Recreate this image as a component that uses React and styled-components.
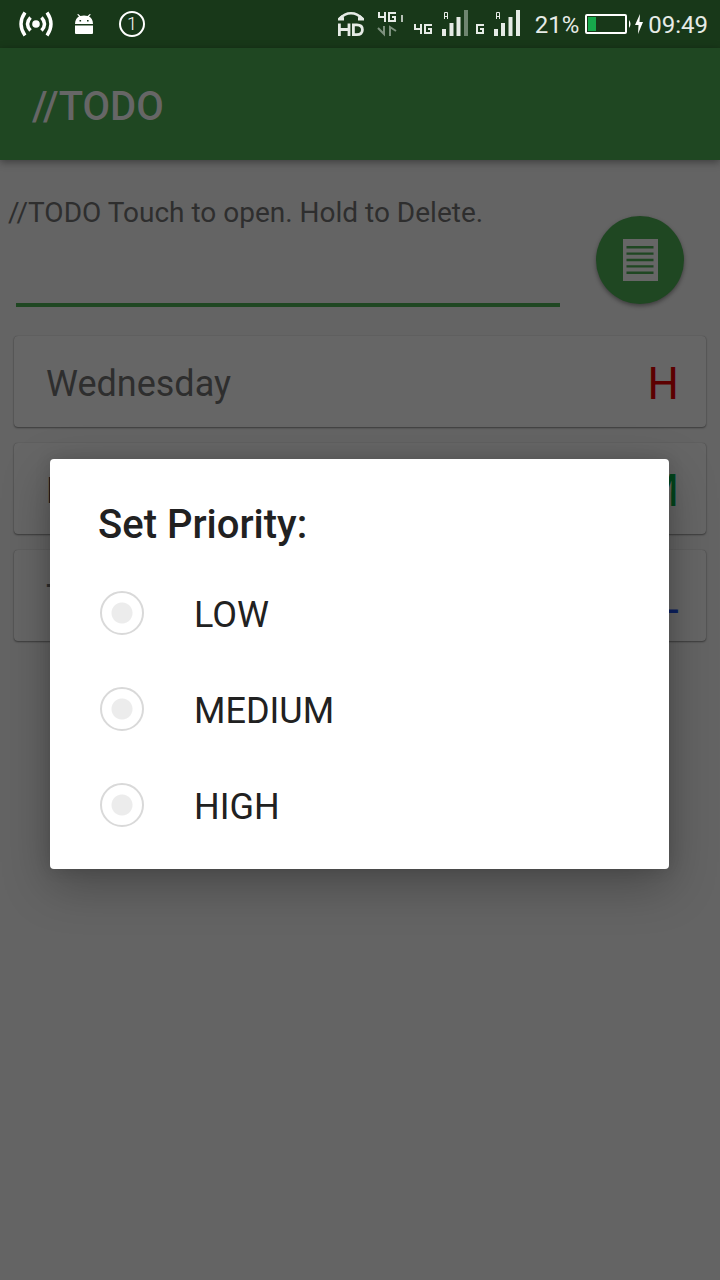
import React from 'react';
import styled, { createGlobalStyle } from 'styled-components';

const GlobalStyle = createGlobalStyle`
  *, *::before, *::after { box-sizing: border-box; }
  html, body { margin: 0; background: #646464; }
  body { font-family: Roboto, "Liberation Sans", sans-serif; color: #212121; }
`;

const Screen = styled.div`
  position: relative;
  min-height: 100vh;
  background: #646464;
`;

const StatusBar = styled.div`
  display: flex;
  align-items: center;
  justify-content: space-between;
  height: 48px;
  padding: 0 12px 0 19px;
  background: #183819;
`;

const StatusGroup = styled.div`
  display: flex;
  align-items: center;
  gap: ${({ $gap }) => $gap}px;

  svg { display: block; flex: none; }
`;

const StatusText = styled.span`
  padding-top: 2px;
  font-size: 24px;
  line-height: 46px;
  color: #e6ebe6;
`;

const CountBadge = styled.span`
  display: grid;
  place-items: center;
  width: 26px;
  height: 26px;
  margin-left: 4px;
  border: 2px solid #ffffff;
  border-radius: 50%;
  font-size: 18px;
  font-weight: 300;
  line-height: 22px;
  color: #ffffff;
`;

const AppBar = styled.header`
  display: flex;
  align-items: center;
  height: 112px;
  padding: 6px 32px 0;
  background: #1f4722;
  box-shadow: 0 2px 8px rgba(0, 0, 0, 0.4);
`;

const AppTitle = styled.h1`
  margin: 0;
  font-size: 40px;
  font-weight: 500;
  line-height: 48px;
  color: #666666;
`;

const Compose = styled.form`
  display: flex;
  align-items: flex-start;
  justify-content: space-between;
  padding: 32px 36px 29px 8px;
`;

const Field = styled.div`
  display: flex;
  flex: 1;
  flex-direction: column;
  margin-right: 36px;
`;

const Hint = styled.label`
  font-size: 28px;
  line-height: 42px;
  color: #2e2e2e;
`;

const TextInput = styled.input`
  height: 73px;
  margin-left: 8px;
  padding: 0;
  border: 0;
  border-bottom: 4px solid #1f4722;
  border-radius: 0;
  outline: none;
  background: transparent;
  color: #2e2e2e;
  font: inherit;
  font-size: 36px;
`;

const AddButton = styled.button`
  display: grid;
  place-items: center;
  flex: none;
  width: 88px;
  height: 88px;
  margin-top: 24px;
  padding: 0;
  border: 0;
  border-radius: 50%;
  background: #1f4722;
  box-shadow: 0 2px 4px rgba(0, 0, 0, 0.4);
`;

const TaskList = styled.ul`
  display: flex;
  flex-direction: column;
  gap: 16px;
  margin: 0;
  padding: 0 14px;
  list-style: none;
`;

const TaskCard = styled.li`
  display: flex;
  align-items: center;
  justify-content: space-between;
  height: 91px;
  padding: 5px 27px 0 32px;
  border-radius: 4px;
  background: #666666;
  box-shadow: 0 1px 2px rgba(0, 0, 0, 0.4), 0 0 1px rgba(0, 0, 0, 0.3);
`;

const TaskName = styled.span`
  font-size: 36px;
  line-height: 48px;
  color: ${({ $strong }) => ($strong ? '#1a1a1a' : '#2e2e2e')};
`;

const Priority = styled.span`
  font-size: 44px;
  line-height: 52px;
  color: ${({ $color }) => $color};
`;

const DialogLayer = styled.div`
  position: absolute;
  inset: 48px 0 0;
  display: flex;
  align-items: center;
  padding: 0 51px 0 50px;
`;

const Dialog = styled.section`
  flex: 1;
  padding: 42px 48px 16px;
  border-radius: 4px;
  background: #ffffff;
  box-shadow: 0 16px 48px rgba(0, 0, 0, 0.28), 0 0 16px rgba(0, 0, 0, 0.12);
`;

const DialogTitle = styled.h2`
  margin: 0 0 16px;
  font-size: 40px;
  font-weight: 500;
  line-height: 48px;
`;

const Options = styled.fieldset`
  margin: 0;
  padding: 0;
  border: 0;
`;

const Option = styled.label`
  display: flex;
  align-items: center;
  gap: 50px;
  height: 96px;
  padding-left: 2px;
`;

const OptionText = styled.span`
  padding-top: 4px;
  font-size: 36px;
  line-height: 48px;
`;

const Radio = styled.input`
  appearance: none;
  flex: none;
  width: 44px;
  height: 44px;
  margin: 0;
  border: 2px solid #d9d9d9;
  border-radius: 50%;
  background: radial-gradient(circle, #ececec 10px, transparent 11px);

  &:checked { background: radial-gradient(circle, #4caf50 10px, transparent 11px); }
`;

const tasks = [
  { name: 'Wednesday', level: 'H', color: '#5c0000' },
  { name: 'Monday', level: 'M', color: '#00461c', strong: true },
  { name: 'Tuesday', level: 'L', color: '#0d2160' },
];

const HotspotIcon = () => (
  <svg width="34" height="28" viewBox="1 0 34 28" fill="none" stroke="#fff" strokeWidth="3.4">
    <circle cx="18" cy="14" r="3.8" fill="#fff" stroke="none" />
    <path d="M12.5 7.5Q6.500 14 12.5 20.5M23.5 7.5Q29.500 14 23.5 20.5M7 2.500Q-1 14 7 25.500M29 2.500Q37 14 29 25.500" />
  </svg>
);

const AndroidIcon = () => (
  <svg width="18" height="20" viewBox="0 0 18 20">
    <path fill="#fff" d="M0 10C0 6 2 3.7 4 2.6L2.2.5 3.2 0 5.4 2Q9 .8 12.6 2L14.8 0l1 .5L14 2.6C16 3.7 18 6 18 10ZM0 11.5h18V19q0 1-1 1H1q-1 0-1-1Z" />
    <path fill="#183819" d="M4.5 6h1.600v1.600H4.500ZM12 6h1.600v1.600H12Z" />
  </svg>
);

const HdCallIcon = () => (
  <svg width="28" height="26" viewBox="0 0 28 26" fill="none" stroke="#e6ebe6">
    <path strokeWidth="2.6" d="M3 7.500Q7.500 2.300 14 2.300T25 7.500" />
    <path fill="#e6ebe6" stroke="none" d="M1 9.500V7.200L4.600 4.200 7 6.500V9.500ZM27 9.500V7.200L23.400 4.200 21 6.500V9.500Z" />
    <path strokeWidth="2.8" d="M2.4 12.500v12.500M12 12.500v12.500M2.400 18.500H12M16.400 13.800h3.500q5.500 0 5.500 4.900t-5.500 4.900h-3.500Z" />
  </svg>
);

const NetworkIcons = () => (
  <svg width="144" height="28" viewBox="0 0 144 28" fill="none" stroke="#e6ebe6" strokeWidth="2">
    <path d="M2 2v5h7M8 2v10M19 3h-7v8h6V7h-3" />
    <path stroke="#b5c0b5" d="M25 5v7" />
    <path stroke="#7d917e" d="M1 18l6 6V16M19 21l-6-4v9" />
    <path d="M38 14v5h7M44 14v10M55 15h-7v8h6v-4h-3" />
    <path strokeWidth="1" d="M67.500 9V2.500h3V9M67.500 6.500h3" />
    <path strokeWidth="4" d="M67 19v7M74.500 13v13M81.500 7v19" />
    <path stroke="#6f8570" strokeWidth="4" d="M89 0v26" />
    <path d="M107 15h-7v8h6v-4h-3" />
    <path strokeWidth="1" d="M119.500 9V2.500h3V9M119.500 6.500h3" />
    <path strokeWidth="4" d="M119 19v7M126 13v13M133.500 7v19M141 0v26" />
  </svg>
);

const BatteryIcon = () => (
  <svg width="59" height="22" viewBox="0 0 59 22">
    <rect x="1" y="2" width="40" height="18" rx="1" fill="none" stroke="#fff" strokeWidth="2" />
    <path fill="#17a84b" d="M3 4h8v14H3Z" />
    <path fill="#fff" d="M44 7q3 4 0 8ZM55 1l-5 11h3.500L53 21l5-12h-3.500Z" />
  </svg>
);

const NoteIcon = () => (
  <svg width="36" height="42" viewBox="0 0 36 42">
    <path fill="#666" d="M1 0h35v42H1Z" />
    <path stroke="#1f4722" strokeWidth="2.4" d="M4.500 8.200h27M4.500 14.600h27M4.500 21h27M4.500 27.400h27M4.500 33.800h27" />
  </svg>
);

export default function App() {
  return (
    <Screen>
      <GlobalStyle />
      <StatusBar>
        <StatusGroup $gap={22}>
          <HotspotIcon />
          <AndroidIcon />
          <CountBadge>1</CountBadge>
        </StatusGroup>
        <StatusGroup $gap={14}>
          <StatusGroup $gap={12}>
            <HdCallIcon />
            <NetworkIcons />
          </StatusGroup>
          <StatusGroup $gap={6}>
            <StatusText>21%</StatusText>
            <StatusGroup $gap={4}>
              <BatteryIcon />
              <StatusText>09:49</StatusText>
            </StatusGroup>
          </StatusGroup>
        </StatusGroup>
      </StatusBar>
      <AppBar>
        <AppTitle>//TODO</AppTitle>
      </AppBar>
      <main>
        <Compose onSubmit={(event) => event.preventDefault()}>
          <Field>
            <Hint htmlFor="task">//TODO Touch to open. Hold to Delete.</Hint>
            <TextInput id="task" type="text" />
          </Field>
          <AddButton type="submit" aria-label="Add task">
            <NoteIcon />
          </AddButton>
        </Compose>
        <TaskList>
          {tasks.map((task) => (
            <TaskCard key={task.name}>
              <TaskName $strong={task.strong}>{task.name}</TaskName>
              <Priority $color={task.color}>{task.level}</Priority>
            </TaskCard>
          ))}
        </TaskList>
      </main>
      <DialogLayer>
        <Dialog role="dialog" aria-labelledby="priority-title">
          <DialogTitle id="priority-title">Set Priority:</DialogTitle>
          <Options aria-labelledby="priority-title">
            {['LOW', 'MEDIUM', 'HIGH'].map((level) => (
              <Option key={level}>
                <Radio type="radio" name="priority" value={level} />
                <OptionText>{level}</OptionText>
              </Option>
            ))}
          </Options>
        </Dialog>
      </DialogLayer>
    </Screen>
  );
}
